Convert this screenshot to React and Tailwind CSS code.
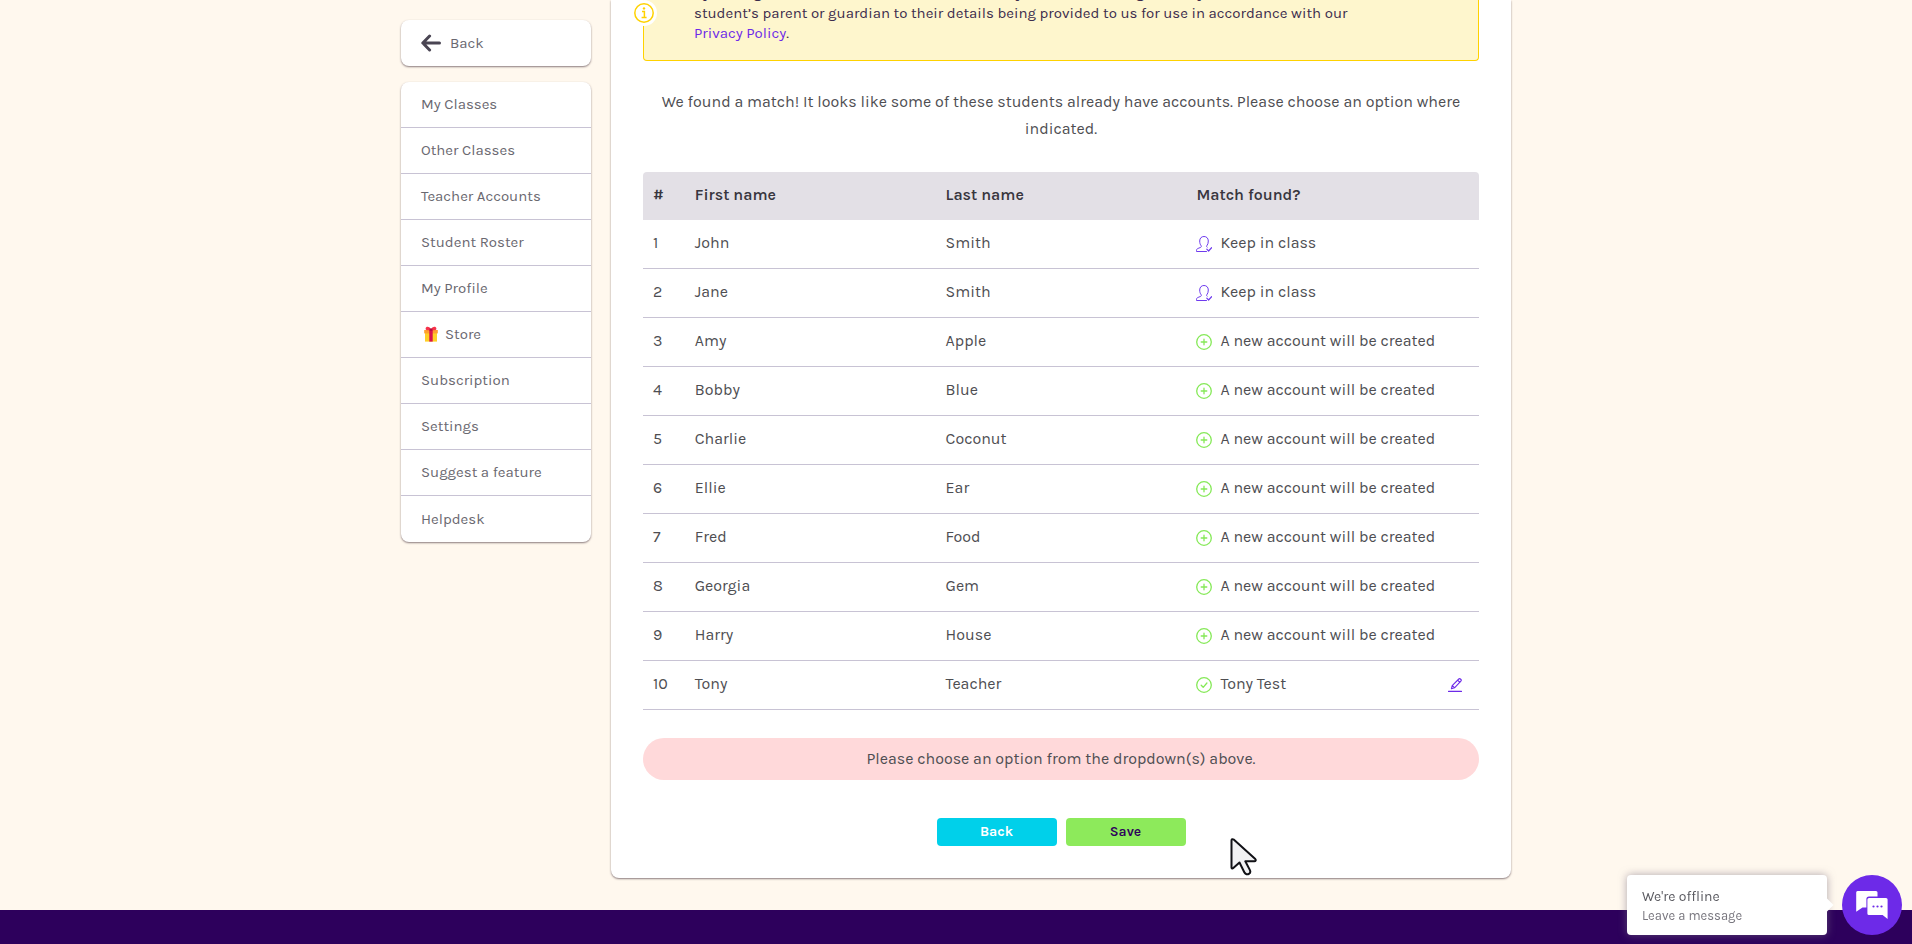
import { useState } from 'react';

const menuItems = [
  'My Classes',
  'Other Classes',
  'Teacher Accounts',
  'Student Roster',
  'My Profile',
  'Store',
  'Subscription',
  'Settings',
  'Suggest a feature',
  'Helpdesk',
];

const students = [
  { first: 'John', last: 'Smith', status: 'keep' },
  { first: 'Jane', last: 'Smith', status: 'keep' },
  { first: 'Amy', last: 'Apple', status: 'new' },
  { first: 'Bobby', last: 'Blue', status: 'new' },
  { first: 'Charlie', last: 'Coconut', status: 'new' },
  { first: 'Ellie', last: 'Ear', status: 'new' },
  { first: 'Fred', last: 'Food', status: 'new' },
  { first: 'Georgia', last: 'Gem', status: 'new' },
  { first: 'Harry', last: 'House', status: 'new' },
  { first: 'Tony', last: 'Teacher', status: 'matched', match: 'Tony Test' },
];

function ArrowIcon() {
  return (
    <svg className="w-5 h-5 text-[#4a4553]" viewBox="0 0 20 20" fill="none" stroke="currentColor" strokeWidth="3" strokeLinecap="round" strokeLinejoin="round" aria-hidden="true">
      <path d="M18.5 10H2M8.6 3L1.8 10L8.6 17" />
    </svg>
  );
}

function GiftIcon() {
  return (
    <svg className="w-4 h-4" viewBox="0 0 16 16" aria-hidden="true">
      <path d="M2 6h12v9.6H2z" fill="#ffcf26" />
      <path d="M1.2 4h13.6v3.4H1.2z" fill="#ff9f2e" />
      <path d="M6.3 4h3.4v11.6H6.3z" fill="#d8124c" />
      <path d="M7.6 4C5.6 4.6 2.4 4.4 2.6 2.4C2.8 .2 6.6 .2 7.6 3zM8.4 4c2 .6 5.2 .4 5-1.6C13.2 .2 9.4 .2 8.4 3z" fill="#f7334a" />
      <path d="M6.6 2.4h2.8v2.4H6.6z" fill="#b30c3c" />
    </svg>
  );
}

function InfoIcon() {
  return (
    <svg className="w-5 h-5" viewBox="0 0 20 20" fill="none" stroke="#ffd200" strokeWidth="1.5" aria-hidden="true">
      <circle cx="10" cy="10" r="9.2" />
      <path d="M8 8.4h2.4v6M7.6 14.6h5" />
      <circle cx="10" cy="5.4" r="1.2" fill="#ffd200" stroke="none" />
    </svg>
  );
}

function UserCheckIcon() {
  return (
    <svg className="w-4 h-4 text-[#6f3bee]" viewBox="0 0 16 16" fill="none" stroke="currentColor" strokeWidth="1" strokeLinecap="round" strokeLinejoin="round" aria-hidden="true">
      <path d="M10.5 15.5H.5v-1.2c0-1 .6-1.5 1.6-1.9l2.5-1c.7-.3 1-.9.6-1.6C4.2 8.6 3.7 7 3.7 5C3.7 2.2 5.5.5 8 .5s4.3 1.7 4.3 4.5c0 2-.5 3.6-1.5 4.8c-.4.7-.2 1.1.3 1.4" />
      <path d="M10.8 13.2l1.8 1.8l3-3.3" strokeWidth="1.2" />
    </svg>
  );
}

function CirclePlusIcon() {
  return (
    <svg className="w-4 h-4 text-[#85e957]" viewBox="0 0 16 16" fill="none" stroke="currentColor" strokeWidth="1.3" strokeLinecap="round" aria-hidden="true">
      <circle cx="8" cy="8" r="7.3" />
      <path d="M8 5.2v5.6M5.2 8h5.6" />
    </svg>
  );
}

function CircleCheckIcon() {
  return (
    <svg className="w-4 h-4 text-[#85e957]" viewBox="0 0 16 16" fill="none" stroke="currentColor" strokeWidth="1.3" strokeLinecap="round" strokeLinejoin="round" aria-hidden="true">
      <circle cx="8" cy="8" r="7.3" />
      <path d="M5.2 8.3l2 2l3.7-4.3" />
    </svg>
  );
}

function PencilIcon() {
  return (
    <svg className="w-[14px] h-[14px]" viewBox="0 0 14 14" fill="none" stroke="currentColor" strokeWidth="1.1" strokeLinecap="round" strokeLinejoin="round" aria-hidden="true">
      <path d="M3.4 10.8l.8-3.2L10.8 1c.5-.5 1.1-.5 1.6 0l.5.5c.5.5.5 1.1 0 1.6L6.5 9.8zM9.6 2.2l2.2 2.2M4.4 7.7l2 2" />
      <path d="M.5 13.4h13" />
    </svg>
  );
}

function ChatIcon() {
  return (
    <svg className="w-8 h-8" viewBox="0 0 32 32" aria-hidden="true">
      <path d="M1.5 2h18.5a1.5 1.5 0 0 1 1.5 1.5v4H13a2.6 2.6 0 0 0-2.6 2.6v8.5H6.5L.2 22.8V3.5A1.5 1.5 0 0 1 1.5 2z" fill="#fff" />
      <path d="M13 9h17a1.6 1.6 0 0 1 1.6 1.6V30l-5-4H13a1.6 1.6 0 0 1-1.6-1.6V10.6A1.6 1.6 0 0 1 13 9z" fill="#fff" />
      <g fill="#6d2ae8">
        <circle cx="17.5" cy="17.5" r="1.1" />
        <circle cx="21.5" cy="17.5" r="1.1" />
        <circle cx="25.5" cy="17.5" r="1.1" />
      </g>
    </svg>
  );
}

function MatchCell({ student }) {
  return (
    <div className="flex items-center gap-2">
      <span className="pt-[2px]">
        {student.status === 'keep' && <UserCheckIcon />}
        {student.status === 'new' && <CirclePlusIcon />}
        {student.status === 'matched' && <CircleCheckIcon />}
      </span>
      {student.status === 'keep' && 'Keep in class'}
      {student.status === 'new' && 'A new account will be created'}
      {student.status === 'matched' && (
        <>
          {student.match}
          <button aria-label="Edit match" className="ml-auto mr-[7px] pt-[2px] text-[#6d2ae8] cursor-pointer"><PencilIcon /></button>
        </>
      )}
    </div>
  );
}

export default function App() {
  const [active, setActive] = useState('');

  return (
    <div className="min-h-screen flex flex-col overflow-hidden bg-[#fff8ee] font-[Karla,'Liberation_Sans',sans-serif] text-[#4e4e52]">
      <div className="w-full max-w-[1110px] mx-auto flex items-start gap-5 pb-8">
        <aside className="w-[190px] shrink-0 pt-5 text-[15px] leading-5 text-[#6a6870]">
          <a href="#back" className="flex items-center gap-[9px] h-[46px] px-5 bg-white rounded-lg shadow-[0_1px_2px_rgba(60,40,50,0.6)]">
            <ArrowIcon />
            Back
          </a>
          <nav className="mt-4 bg-white rounded-lg shadow-[0_1px_2px_rgba(60,40,50,0.6)] divide-y divide-[#c8c3d4]">
            {menuItems.map((item) => (
              <a key={item} href="#menu" onClick={() => setActive(item)} aria-current={active === item ? 'page' : undefined} className="flex items-center h-[46px] px-5 pb-px last:pb-0">
                {item === 'Store' && <span className="ml-[2px] mr-[6px]"><GiftIcon /></span>}
                {item}
              </a>
            ))}
          </nav>
        </aside>

        <main className="flex-1 min-w-0 px-8 pb-8 bg-white rounded-b-lg shadow-[0_1px_2px_rgba(60,40,50,0.6)]">
          <div className="relative -mt-[17px] pl-[50px] pr-12 pb-[17px] border border-t-0 border-[#ffd200] rounded-b bg-[#fef6cd] text-[15px] leading-5 text-[#3c2c4c]">
            <span className="absolute -left-[13px] bottom-[34px] p-[3px] rounded-full bg-white"><InfoIcon /></span>
            By adding student information to this account you are confirming that any consent came from the
            <br />
            student’s parent or guardian to their details being provided to us for use in accordance with our
            <br />
            <a href="#privacy" className="text-[#6d2ae8]">Privacy Policy</a>.
          </div>

          <p className="mt-[27px] mb-[30px] text-center leading-[27px]">
            We found a match! It looks like some of these students already have accounts. Please choose an option where indicated.
          </p>

          <table className="w-full table-fixed text-left border-separate border-spacing-0">
            <thead>
              <tr className="h-12 bg-[#e3e0e6] text-[#38363e]">
                <th className="w-[5%] px-[10px] pb-[2px] font-semibold rounded-tl">#</th>
                <th className="w-[30%] px-[10px] pb-[2px] font-semibold">First name</th>
                <th className="w-[30%] px-[10px] pb-[2px] font-semibold">Last name</th>
                <th className="w-[35%] px-[10px] pb-[2px] font-semibold rounded-tr">Match found?</th>
              </tr>
            </thead>
            <tbody>
              {students.map((s, i) => (
                <tr key={s.first} className="h-[49px]">
                  <td className="px-[10px] pb-[2px] border-b border-[#c8c3d4]">{i + 1}</td>
                  <td className="px-[10px] pb-[2px] border-b border-[#c8c3d4]">{s.first}</td>
                  <td className="px-[10px] pb-[2px] border-b border-[#c8c3d4]">{s.last}</td>
                  <td className="px-[10px] pb-[2px] border-b border-[#c8c3d4]"><MatchCell student={s} /></td>
                </tr>
              ))}
            </tbody>
          </table>

          <div role="alert" className="mt-7 flex items-center justify-center h-[42px] rounded-full bg-[#ffd9da]">
            Please choose an option from the dropdown(s) above.
          </div>

          <div className="mt-[38px] flex justify-center gap-[9px] text-sm">
            <button className="w-[120px] h-7 rounded bg-[#00d0ea] text-white font-bold cursor-pointer">Back</button>
            <button className="w-[120px] h-7 rounded bg-[#8dea5b] text-[#2d005c] font-semibold cursor-pointer">Save</button>
          </div>
        </main>
      </div>

      <footer className="flex-1 min-h-8 bg-[#2d005c]" />

      <div className="fixed right-[10px] bottom-[9px] flex items-center gap-[15px]">
        <div className="relative w-[200px] h-[60px] px-[15px] py-3 rounded bg-white shadow-[0_0_8px_rgba(120,110,130,0.6)]">
          <span className="absolute -right-1 top-6 w-3 h-3 rotate-45 bg-white" />
          <div className="text-sm leading-5 text-[#5a5a60]">We're offline</div>
          <div className="text-[13px] leading-[18px] text-[#78767e]">Leave a message</div>
        </div>
        <button aria-label="Open chat" className="w-[60px] h-[60px] flex items-center justify-center rounded-full bg-[#6d2ae8] cursor-pointer">
          <ChatIcon />
        </button>
      </div>

      <svg className="fixed left-[1229px] top-[837px] w-7 h-10 pointer-events-none" viewBox="0 0 28 40" aria-hidden="true">
        <path d="M2.5 3.5v27c0 1 1 1.3 1.8.6l6.2-5.6l4.8 9.8c1 2 3.2 2.5 4.6 1.6c1.5-.9 1.7-2.4.9-4L16.3 24.3h9c1.4 0 1.8-1.3 1-2.2L4.7 2.6C3.6 1.7 2.5 2.2 2.5 3.5z" fill="#f1f1f3" stroke="#111116" strokeWidth="2" strokeLinejoin="round" />
      </svg>
    </div>
  );
}
